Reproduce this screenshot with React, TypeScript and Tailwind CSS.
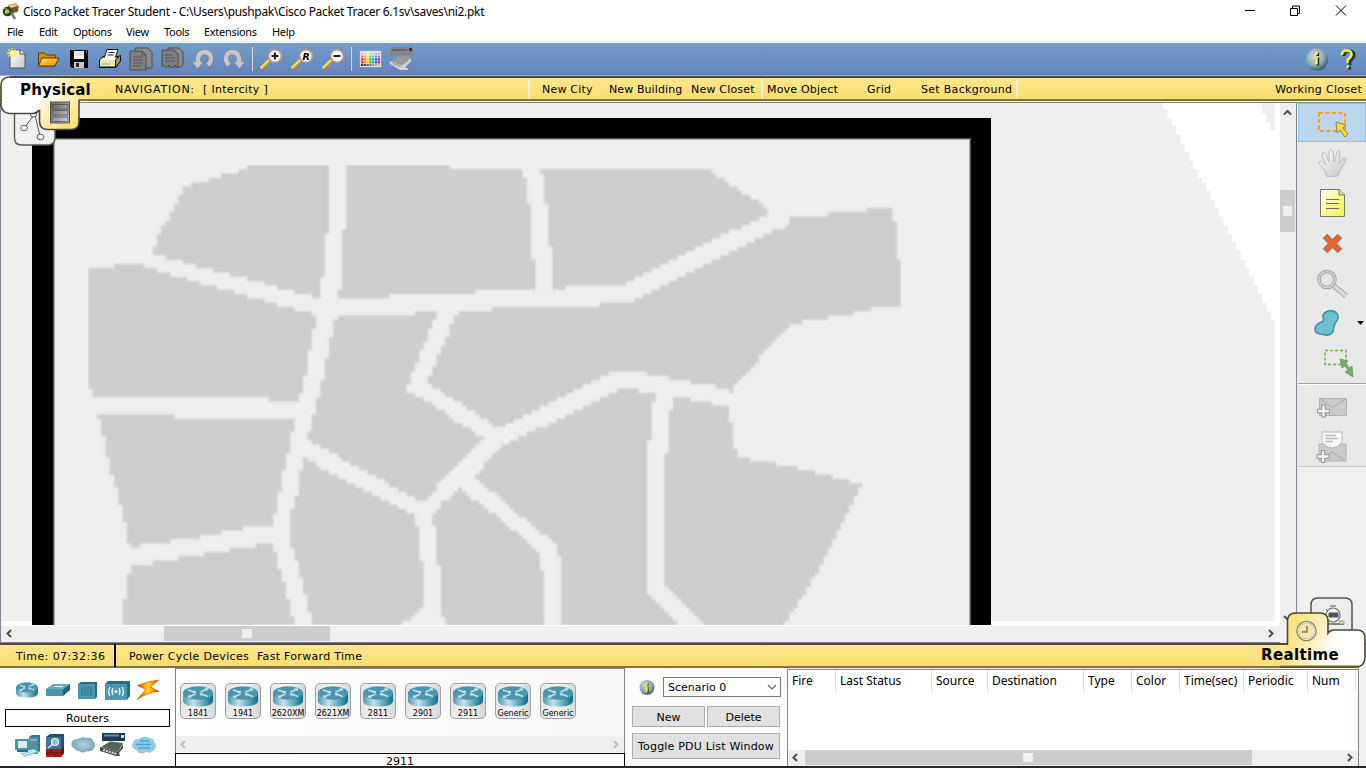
import React from "react";

type Pt = [number, number];

/* ------------------------------ city map ------------------------------ */

const BLOCKS: Pt[][] = [
  [[152, 254], [157, 238], [173, 210], [183, 190], [192, 183], [207, 180], [233, 173], [252, 165], [329, 165], [328, 218], [324, 270], [319, 298]],
  [[347, 165], [440, 166], [470, 169], [522, 169], [527, 183], [531, 225], [535, 290], [480, 291], [473, 293], [393, 296], [338, 298], [342, 275], [343, 230], [347, 222]],
  [[541, 169], [707, 169], [740, 191], [768, 208], [767, 216], [727, 233], [687, 253], [643, 275], [625, 284], [570, 286], [553, 290], [549, 225]],
  [[458, 311], [491, 310], [500, 307], [583, 306], [628, 303], [643, 295], [703, 267], [743, 245], [788, 225], [789, 217], [817, 216], [867, 210], [892, 207], [896, 233], [901, 283], [901, 307], [877, 307], [853, 314], [803, 321], [788, 327], [733, 387], [731, 392], [713, 386], [682, 381], [660, 376], [632, 371], [610, 373], [573, 391], [500, 427], [496, 427], [460, 403], [427, 383], [447, 337]],
  [[89, 270], [93, 268], [127, 265], [137, 264], [163, 273], [230, 291], [280, 305], [316, 315], [307, 367], [299, 401], [230, 397], [93, 397], [89, 387]],
  [[337, 316], [407, 315], [420, 312], [438, 311], [427, 337], [407, 387], [407, 392], [427, 400], [457, 422], [483, 438], [443, 478], [427, 500], [415, 499], [387, 483], [363, 470], [308, 440], [313, 417], [320, 393], [323, 377], [333, 327]],
  [[97, 415], [163, 415], [197, 419], [295, 419], [287, 457], [278, 500], [273, 526], [252, 527], [200, 537], [170, 541], [133, 547], [128, 543], [123, 513], [110, 467], [102, 430]],
  [[131, 565], [150, 563], [200, 555], [273, 543], [283, 580], [290, 607], [296, 626], [122, 626], [127, 580]],
  [[303, 457], [333, 475], [370, 493], [413, 515], [420, 537], [424, 608], [398, 626], [313, 626], [303, 583], [291, 543], [291, 513], [298, 493]],
  [[460, 488], [528, 542], [540, 553], [543, 580], [544, 626], [449, 626], [442, 617], [439, 567], [433, 517], [443, 502]],
  [[475, 477], [500, 446], [543, 427], [577, 410], [617, 390], [623, 388], [655, 393], [652, 413], [647, 463], [647, 593], [682, 626], [561, 626], [561, 570], [557, 543], [533, 527], [500, 498]],
  [[673, 397], [700, 401], [728, 407], [732, 430], [737, 457], [787, 466], [833, 477], [862, 484], [843, 520], [820, 567], [800, 600], [783, 626], [707, 626], [665, 585], [665, 473], [670, 413]],
];

const LIGHT: Pt[][] = [[[1161, 100], [1258, 100], [1277, 137], [1280, 137], [1280, 321], [1274, 321]]];

const STEP = 4.3;
const OX = 2.2;
const OY = 1.6;

/** Turns polygons into a path of square map cells. */
function cells(polys: Pt[][]): string {
  let d = "";
  for (const poly of polys) {
    const ys = poly.map((p) => p[1] - OY);
    const first = Math.floor(Math.min(...ys) / STEP);
    const last = Math.ceil(Math.max(...ys) / STEP);
    for (let r = first; r <= last; r++) {
      const cy = (r + 0.5) * STEP + OY;
      const hits: number[] = [];
      poly.forEach((a, i) => {
        const b = poly[(i + 1) % poly.length];
        if (a[1] <= cy !== b[1] <= cy) hits.push(a[0] + ((cy - a[1]) / (b[1] - a[1])) * (b[0] - a[0]));
      });
      hits.sort((p, q) => p - q);
      for (let i = 0; i + 1 < hits.length; i += 2) {
        const x0 = Math.round((hits[i] - OX) / STEP) * STEP + OX;
        const x1 = Math.round((hits[i + 1] - OX) / STEP) * STEP + OX;
        if (x1 > x0) d += `M${x0.toFixed(1)} ${(r * STEP + OY).toFixed(1)}H${x1.toFixed(1)}v${STEP + 0.05}H${x0.toFixed(1)}z`;
      }
    }
  }
  return d;
}

const blockPath = cells(BLOCKS);
const lightPath = cells(LIGHT);

function CityMap() {
  return (
    <svg width="1279" height="522" viewBox="1 103 1279 522" className="block shrink-0">
      <defs>
        <filter id="soft" x="0" y="0" width="100%" height="100%"><feGaussianBlur stdDeviation="1.200" /></filter>
      </defs>
      <rect x="0" y="103" width="1280" height="522" fill="#efefef" />
      <path d={lightPath} fill="#fff" />
      <rect x="1275" y="103" width="5" height="522" fill="#fff" />
      <rect x="0" y="621" width="1280" height="4" fill="#fff" />
      <rect x="32" y="118" width="959" height="510" fill="#000" />
      <rect x="53" y="138" width="918" height="500" fill="#555" />
      <rect x="54" y="139" width="916" height="500" fill="#a9a9a9" />
      <rect x="55" y="140" width="914" height="500" fill="#eee" />
      <g filter="url(#soft)"><path d={blockPath} fill="#cecece" /></g>
    </svg>
  );
}

/* ------------------------------ helpers ------------------------------ */

function Ico({ w, h, children, cls = "" }: { w: number; h: number; children: React.ReactNode; cls?: string }) {
  return <svg width={w} height={h} viewBox={`0 0 ${w} ${h}`} className={"block shrink-0 " + cls}>{children}</svg>;
}

const Defs = () => (
  <svg width="0" height="0" className="absolute">
    <defs>
      <linearGradient id="teal" x1="0" x2="1"><stop offset="0" stopColor="#4f97b0" /><stop offset=".35" stopColor="#c3e2ec" /><stop offset="1" stopColor="#04708f" /></linearGradient>
      <linearGradient id="page" x1="0" y1="0" x2="1" y2="1"><stop offset="0" stopColor="#fff" /><stop offset="1" stopColor="#c9c9c9" /></linearGradient>
      <linearGradient id="folder" x1="0" y1="0" x2="1" y2="1"><stop offset="0" stopColor="#ffe169" /><stop offset="1" stopColor="#e98a00" /></linearGradient>
      <linearGradient id="note" x1="0" y1="0" x2="1" y2="1"><stop offset="0" stopColor="#fffff0" /><stop offset="1" stopColor="#f5f53a" /></linearGradient>
      <radialGradient id="orb" cx=".4" cy=".35" r=".7"><stop offset="0" stopColor="#d5dadc" /><stop offset=".6" stopColor="#90a8b4" /><stop offset="1" stopColor="#2c5266" /></radialGradient>
      <radialGradient id="cloud"><stop offset="0" stopColor="#b8d3de" /><stop offset="1" stopColor="#7ba7b9" /></radialGradient>
      <linearGradient id="bolt" x1="0" x2="1"><stop offset="0" stopColor="#e22c00" /><stop offset=".5" stopColor="#ffe000" /><stop offset="1" stopColor="#e63000" /></linearGradient>
      <linearGradient id="physGrad" gradientUnits="userSpaceOnUse" x1="30" y1="18" x2="96" y2="2"><stop offset="0" stopColor="#fff" /><stop offset=".35" stopColor="#fffdf4" /><stop offset="1" stopColor="#fbe38a" stopOpacity="0" /></linearGradient>
      <linearGradient id="rackTab" x1="0" y1="0" x2="1" y2="1"><stop offset="0" stopColor="#fffbe8" /><stop offset="1" stopColor="#f9dd68" /></linearGradient>
      <linearGradient id="realGrad" gradientUnits="userSpaceOnUse" x1="44" y1="28" x2="86" y2="48"><stop offset="0" stopColor="#fae383" /><stop offset=".4" stopColor="#fcecaa" /><stop offset="1" stopColor="#fff" /></linearGradient>
      <linearGradient id="realFade" gradientUnits="userSpaceOnUse" x1="10" y1="0" x2="70" y2="0"><stop offset="0" stopColor="#fce486" stopOpacity="0" /><stop offset="1" stopColor="#fdeeb0" /></linearGradient>
      <linearGradient id="metal" x1="0" y1="0" x2="1" y2="1"><stop offset="0" stopColor="#666" /><stop offset="1" stopColor="#d0d0d0" /></linearGradient>
    </defs>
  </svg>
);

const Cell = ({ children }: { children: React.ReactNode }) => <Ico w={31} h={30}>{children}</Ico>;

const Curl = ({ flip = false }: { flip?: boolean }) => (
  <g transform={flip ? "translate(32 0) scale(-1 1)" : undefined}>
    <path d="M11 18V14Q12 8 18 8Q24 8.500 24 15Q24 18 21 21" fill="none" stroke="#818385" strokeWidth="6" />
    <path d="M5 17.500H16.500L10.500 25z" fill="#c3c6c8" stroke="#818385" strokeWidth=".7" />
    <path d="M11 19V14Q12 8 18 8Q24 8.500 24 15Q24 18 21 21" fill="none" stroke="#c3c6c8" strokeWidth="4.400" />
  </g>
);

const Lens = ({ mark }: { mark: string }) => (
  <Cell>
    <path d="M6 24.500L15 16" stroke="#cf9d1c" strokeWidth="3.200" />
    <path d="M5.500 24L14 16" stroke="#ffe04a" strokeWidth="2" />
    <circle cx="20" cy="12" r="6.300" fill="#f7f7f4" stroke="#c29a86" strokeWidth="1.600" />
    {mark === "R" ? (
      <text x="16.600" y="15.500" fontSize="9.500" fontWeight="700" fontStyle="italic" fontFamily="DejaVu Sans, sans-serif">R</text>
    ) : (
      <path d={mark === "+" ? "M16.500 12h7M20 8.500v7" : "M16.500 12h7"} stroke="#222" strokeWidth="2" />
    )}
  </Cell>
);

function Chevron({ dir, color = "#505050" }: { dir: "left" | "right" | "up" | "down"; color?: string }) {
  const d = { left: "M6 1L2.500 4.500L6 8", right: "M3 1L6.500 4.500L3 8", up: "M1 6.500L4.500 3L8 6.500", down: "M1 3L4.500 6.500L8 3" }[dir];
  return <Ico w={9} h={9}><path d={d} fill="none" stroke={color} strokeWidth="2" /></Ico>;
}

/* ------------------------------ top bars ------------------------------ */

function TitleBar() {
  return (
    <div className="flex h-[22px] items-center bg-white pl-[2px]">
      <Ico w={18} h={18}>
        <path d="M6 3l8-2 3 3-1 6-7 2-4-4z" fill="#b98f4c" />
        <path d="M7 3l7-1 2 2-7 2z" fill="#e4c88d" />
        <path d="M9 6l7-2v5l-6 2z" fill="#6c5427" />
        <circle cx="5.500" cy="9.500" r="4.800" fill="#253b2c" />
        <circle cx="5" cy="9.500" r="2.200" fill="#dfc928" />
        <path d="M2 7l3-1M3 12l3-1M8 10l4 2" stroke="#61a05d" />
        <path d="M10 12l3 5" stroke="#777d80" strokeWidth="2.500" />
      </Ico>
      <span className="ml-[3px] w-[500px] whitespace-nowrap pt-[2px] font-['Noto_Sans',sans-serif] text-[12px] tracking-[-0.32px]">
        Cisco Packet Tracer Student - C:\Users\pushpak\Cisco Packet Tracer 6.1sv\saves\ni2.pkt
      </span>
      <Ico w={110} h={20} cls="ml-auto mr-[16px]">
        <path d="M5 9.500h10" stroke="#000" />
        <path d="M50.500 7.500h7v7h-7zM52.500 7v-2h7v7.500h-2" fill="none" stroke="#000" />
        <path d="M96 4.500l10 10M106 4.500l-10 10" stroke="#000" />
      </Ico>
    </div>
  );
}

function MenuBar() {
  const items: [string, string][] = [
    ["File", "w-[32px]"], ["Edit", "w-[34px]"], ["Options", "w-[53px]"], ["View", "w-[38px]"],
    ["Tools", "w-[40px]"], ["Extensions", "w-[68px]"], ["Help", "w-[40px]"],
  ];
  return (
    <div className="flex h-[20px] items-center border-b border-[#f0f0f0] bg-white pl-[7px] pt-[2px] font-['Noto_Sans',sans-serif] text-[11px] tracking-[-0.3px]">
      {items.map(([t, w]) => <span key={t} className={w + " whitespace-nowrap"}>{t}</span>)}
    </div>
  );
}

function Toolbar() {
  const swatches = ["#e24", "#e80", "#dd0", "#3b3", "#0aa", "#35d", "#92c"];
  return (
    <div className="mt-px flex h-[33px] items-center border-b border-[#8db5dd] bg-gradient-to-b from-[#739ecb] to-[#6484ba] pl-px">
      <Cell>
        <path d="M9 6h10l5 4v14H9z" fill="url(#page)" stroke="#555" />
        <path d="M19 6v4h5" fill="#fff" stroke="#444" />
        <path d="M11 4v10M6 9h10M7.500 5.500l7 7M14.500 5.500l-7 7" stroke="#ffef3a" strokeWidth="1.300" />
        <circle cx="11" cy="9" r="2" fill="#fffdc0" />
      </Cell>
      <Cell>
        <path d="M6.500 22V9h6l2 2h9v11z" fill="#d68b06" stroke="#5b3d08" />
        <path d="M6.500 22l3.500-8h17l-4 8z" fill="url(#folder)" stroke="#5b3d08" />
      </Cell>
      <Cell>
        <path d="M7 6h18v18H9l-2-2z" fill="#070707" />
        <path d="M11 7h10v8H11z" fill="#f4f4f4" /><path d="M12 9h8M12 11h8" stroke="#ccc" />
        <path d="M11 18h10v6H11z" fill="#c7c7c7" /><path d="M13 19h3v4h-3z" fill="#222" />
        <path d="M23 8h1" stroke="#fff" />
      </Cell>
      <Cell>
        <path d="M5 16l4-4h15l3-1v6l-5 7H5z" fill="#111" />
        <path d="M13 5.500h11l-3 9H10z" fill="#fff" stroke="#111" />
        <path d="M14.500 8.500h6M13.500 11h6" stroke="#222" />
        <path d="M6 16h15v6.500H6z" fill="#e6e9bd" /><path d="M6 16l3-2.500h14L21 16z" fill="#ffffdb" />
        <path d="M22 16l4-4v5l-4 5z" fill="#909870" /><path d="M8 20h8" stroke="#b6ba8e" strokeWidth="1.500" />
      </Cell>
      <Cell>
        <path d="M10 4h13l4 4v16H12z" fill="#898b8e" stroke="#4c4f53" />
        <path d="M5 7h12l4 4v15H5z" fill="#7d7f82" stroke="#4c4f53" />
        <path d="M17 7v4h4M8 13h10M8 16h10M8 19h10M8 22h8" fill="none" stroke="#53565a" />
      </Cell>
      <Cell>
        <path d="M12 4h11l4 4v13l-3 2H12z" fill="#898b8e" stroke="#4c4f53" />
        <path d="M6 6h12l4 4v14l-3-3-3 3-3-3-3 3-2-3-2 2z" fill="#7d7f82" stroke="#4c4f53" />
        <path d="M9 11h8M9 14h10M9 17h10" stroke="#53565a" />
      </Cell>
      <Cell><Curl /></Cell>
      <Cell><Curl flip /></Cell>
      <div className="ml-[3px] mr-[2px] h-[24px] w-px bg-[#d3dae5]" />
      <Lens mark="+" /><Lens mark="R" /><Lens mark="-" />
      <div className="mx-[3px] h-[24px] w-px bg-[#d3dae5]" />
      <Cell>
        <path d="M5 7h21v16H5z" fill="#f2f2f2" stroke="#bbb" strokeWidth=".5" />
        {swatches.map((c, i) => (
          <g key={c}>
            <rect x={6 + i * 2.8} y="8.500" width="2.200" height="2.200" fill={c} opacity=".35" />
            <rect x={6 + i * 2.8} y="11.500" width="2.200" height="2.200" fill={c} opacity=".65" />
            <rect x={6 + i * 2.8} y="14.300" width="2.200" height="2.300" fill={c} />
            <rect x={6 + i * 2.8} y="17.200" width="2.200" height="2.300" fill={c} />
            <rect x={6 + i * 2.8} y="20" width="2.200" height="2" fill="#333" opacity={1 - i * 0.12} />
          </g>
        ))}
      </Cell>
      <Cell>
        <path d="M4 3h23v8.500H4z" fill="#858585" /><path d="M6 5h15v2H6z" fill="#666" /><path d="M23 4h3v3h-3z" fill="#333" />
        <path d="M4 18l10-6.500 11 1-2 6-8 5-11-4z" fill="#9b9b9b" />
        <path d="M3 17l13 4.500 9-7v3l-6 6 3 1v1.500h-8L4 20z" fill="#d2d2d2" /><path d="M7 19.500l9 3.500" stroke="#777" strokeDasharray="2 1" />
      </Cell>
      <Ico w={54} h={30} cls="ml-auto mr-[7px]">
        <circle cx="12" cy="15.500" r="11" fill="url(#orb)" />
        <path d="M12.700 9v3M12.700 13.500v8" stroke="#222" strokeWidth="3" />
        <path d="M11.500 8v3M11.500 12.500v8" stroke="#f5f52a" strokeWidth="2.500" />
        <path d="M38 11q0-5 5-5q5 0 5 4q0 3-4 6v4" transform="translate(1 1)" fill="none" stroke="#252e38" strokeWidth="3" />
        <path d="M37 11q0-4.500 4.500-4.500q5 0 5 3.500q0 3-4 6v3" fill="none" stroke="#f5f52a" strokeWidth="2.400" />
        <path d="M43 22.500h3v3h-3z" fill="#252e38" /><path d="M41.500 21.500h2.400v2.400h-2.400z" fill="#f5f52a" />
      </Ico>
    </div>
  );
}

function PhysicalTab() {
  return (
    <div className="absolute left-0 top-0">
      <svg width="110" height="72" viewBox="0 0 110 72" className="block">
        <path d="M14.500 30V62q0 7 7 7H49q6-1 6-7V30z" fill="#f1f1f1" stroke="#5a5a5a" strokeWidth="1.500" />
        <path d="M34 39L24 52M35 39L40 60" stroke="#555" fill="none" />
        <ellipse cx="33.500" cy="38.500" rx="3" ry="2.500" fill="#fff" stroke="#444" />
        <ellipse cx="24" cy="52" rx="3.500" ry="2.800" fill="#fff" stroke="#555" /><ellipse cx="40.500" cy="61" rx="3.500" ry="2.800" fill="#fff" stroke="#555" />
        <path d="M0 0H10V3L1 10z" fill="#fff" />
        <path d="M39 22V45q0 8.500 8 8.500H71q8 0 8-8V22z" fill="url(#rackTab)" />
        <path d="M40 2H10Q1.500 2 1.500 9V29Q2 37 10 37.500H32Q39 38 39 31V25H40z" fill="#fff" />
        <path d="M40 2H100V23H40z" fill="url(#physGrad)" />
        <path d="M12 1H10Q1 1.500 1 9V29Q2 37 10 37.500H32Q37 37.500 39 34" fill="none" stroke="#48473f" strokeWidth="1.600" />
        <path d="M39.500 34V45q0 8.500 8 8.500H71q8 0 8-8V24" fill="none" stroke="#4b4838" strokeWidth="1.600" />
        <rect x="50.500" y="26" width="19" height="21" fill="url(#metal)" stroke="#555" />
        <path d="M52 28.500h16v4.500H52zM52 34.500h16V39H52zM52 41h16v4.500H52z" fill="url(#metal)" stroke="#494949" strokeWidth=".7" />
      </svg>
      <span className="absolute left-[20px] top-[4px] font-['DejaVu_Sans',sans-serif] text-[15px] font-bold leading-[20px] tracking-[0.15px]">Physical</span>
    </div>
  );
}

function NavBar() {
  return (
    <div className="relative z-10 mb-px flex h-[25px] items-center border-b-2 border-t-2 border-b-[#847335] border-t-[#4b4a40] bg-gradient-to-b from-[#fce68d] to-[#fadf6f] pl-[115px] font-['DejaVu_Sans',sans-serif] text-[11px] tracking-[0.3px]">
      <span className="w-[88px] whitespace-nowrap pt-[3px] tracking-[0.75px]">NAVIGATION:</span>
      <span className="w-[325px] whitespace-nowrap pt-[3px]">[ Intercity ]</span>
      <span className="h-[20px] w-[2px] bg-[#f2f0e6]" />
      <span className="w-[79px] whitespace-nowrap pl-[12px] pt-[3px] tracking-[0.2px]">New City</span>
      <span className="w-[82px] whitespace-nowrap pt-[3px] tracking-[0.1px]">New Building</span>
      <span className="w-[70px] whitespace-nowrap pt-[3px] tracking-[0.2px]">New Closet</span>
      <span className="h-[20px] w-[2px] bg-[#f2f0e6]" />
      <span className="w-[104px] whitespace-nowrap pl-[4px] pt-[3px] tracking-[0.2px]">Move Object</span>
      <span className="w-[54px] whitespace-nowrap pt-[3px]">Grid</span>
      <span className="w-[95px] whitespace-nowrap pt-[3px]">Set Background</span>
      <span className="h-[20px] w-[2px] bg-[#f2f0e6]" />
      <span className="ml-auto mr-[4px] whitespace-nowrap pt-[3px]">Working Closet</span>
      <div className="absolute left-0 top-[-2px]"><PhysicalTab /></div>
    </div>
  );
}

/* ------------------------------ workspace ------------------------------ */

const Envelope = ({ open = false }: { open?: boolean }) => (
  <g>
    <path d="M19 6h27v17H19z" fill="#c9c9c9" stroke="#b2b2b2" />
    {open ? (
      <>
        <path d="M22-6h20V4q-4 6-10 6T22 4z" fill="#f8f8f8" stroke="#b5b5b5" />
        <path d="M25-2.500h11M25 .5h13M25 3.500h8" stroke="#bbb" strokeWidth="1.500" />
        <path d="M19 23l13-9 13 9" fill="none" stroke="#aaa" />
      </>
    ) : (
      <path d="M19 6l13 9 14-9" fill="none" stroke="#a9a9a9" />
    )}
    <path d="M23 12v13M16.500 18.500h13" stroke="#969696" strokeWidth="4.500" /><path d="M23 13v11M17.500 18.500h11" stroke="#f6f6f6" strokeWidth="2.300" />
  </g>
);

function ToolStrip() {
  return (
    <div className="flex w-[68px] flex-col">
      <div className="flex h-[39px] border border-[#8fc3ee] bg-[#bbd6ed]">
        <Ico w={66} h={37}>
          <rect x="20" y="9" width="26" height="18" fill="none" stroke="#f6a21c" strokeWidth="2" strokeDasharray="4 2.500" />
          <path d="M37 18l10 3-3 3 5 6-3 3-5-7-3 3z" fill="#ffdb32" stroke="#8a8152" strokeWidth="1" />
        </Ico>
      </div>
      <div className="flex flex-col border-b border-[#a3a3a3] bg-[#e9e9e9] pb-px">
        <Ico w={68} h={40}>
          <defs><linearGradient id="hand" x2="1" y2="1"><stop stopColor="#fff" /><stop offset="1" stopColor="#c5c5c5" /></linearGradient></defs>
          <path d="M29 34.500q-2-7-7-12q-2-3 0-3.500q2 0 6 4l-4-10q0-3 3-2l4 9l0-11q1-3 4 0l1 11l3-10q3-2 3 1l-1 11l4-6q4-1 3 2l-6 11l-2 5z" fill="url(#hand)" stroke="#bcbcbc" />
        </Ico>
        <Ico w={68} h={40}>
          <path d="M22.500 7.500h19l5 5v22h-24z" fill="url(#note)" stroke="#75756c" /><path d="M41 7v6h6" fill="#dddda0" stroke="#75756c" />
          <path d="M28 17.500h13M28 21.500h13M28 26.500h13" stroke="#6e6e67" />
        </Ico>
        <Ico w={68} h={40}>
          <path d="M27 14l15 15M42 14L27 29" stroke="#857c79" strokeWidth="6.500" /><path d="M27.500 14.500l14 14M41.500 14.500l-14 14" stroke="#ec6223" strokeWidth="4.500" />
        </Ico>
        <Ico w={68} h={40}>
          <path d="M35 23l13 11" stroke="#a7a7a7" strokeWidth="5.500" /><path d="M35 23l13 11" stroke="#dadada" strokeWidth="3.500" />
          <circle cx="29" cy="17.500" r="8" fill="#e4e4e4" stroke="#a5a5a5" strokeWidth="3.500" /><circle cx="29" cy="17.500" r="8" fill="none" stroke="#d7d7d7" strokeWidth="1.500" />
        </Ico>
        <Ico w={68} h={40}>
          <g transform="translate(0 2.500)"><path d="M28 7.500Q33 4.500 38 8Q43 12 37 19Q35 24 35 27Q32 32 25 30Q16 29 17 24Q18 19 25 17Q26 14 25 12Q25 9 28 7.500z" fill="#6bc1ce" stroke="#42909b" strokeWidth="1.600" /></g>
          <path d="M59 19h7l-3.500 4z" fill="#111" />
        </Ico>
        <Ico w={68} h={40}>
          <rect x="27" y="8.500" width="21" height="14" fill="none" stroke="#71b53f" strokeWidth="1.500" strokeDasharray="3 2" />
          <path d="M42 17l8 2-2 2 3 5 3-2 1 11-8-5 3-2-3-4-3 2z" fill="#74ad68" stroke="#6f926c" strokeWidth=".8" />
        </Ico>
      </div>
      <div className="flex flex-col border-b border-[#c9c9c9] border-t border-t-white bg-[#e9e9e9]">
        <Ico w={68} h={38}><g transform="translate(2.500 7.500)"><Envelope /></g></Ico>
        <Ico w={68} h={43}><g transform="translate(2 15)"><Envelope open /></g></Ico>
      </div>
    </div>
  );
}

function Workspace() {
  return (
    <div className="flex h-[541px] shrink-0 border-l border-t border-[#81858d] bg-[#efefef]">
      <div className="flex w-[1279px] flex-col">
        <CityMap />
        <div className="flex h-[18px] items-start border-b border-t border-b-[#81858d] border-t-white bg-[#efefef]">
          <div className="flex w-[163px] justify-start pl-[4px] pt-[3px]"><Chevron dir="left" /></div>
          <div className="flex h-[15px] w-[166px] items-center justify-center bg-[#cdcdcd]"><div className="h-[9px] w-[10px] bg-[#f0f0f0]" /></div>
          <div className="ml-auto mr-[5px] pt-[3px]"><Chevron dir="right" /></div>
        </div>
      </div>
      <div className="flex w-[17px] flex-col items-start border-r border-[#81858d] bg-[#efefef]">
        <div className="flex h-[87px] pl-[3px] pt-[5px]"><Chevron dir="up" /></div>
        <div className="flex h-[42px] w-[15px] items-center justify-center bg-[#cdcdcd]"><div className="h-[10px] w-[9px] bg-[#f0f0f0]" /></div>
        <div className="mb-[21px] mt-auto pl-[3px]"><Chevron dir="down" /></div>
      </div>
      <div className="flex bg-[#f0f0f0] pl-px"><ToolStrip /></div>
    </div>
  );
}

function RealtimeTab() {
  return (
    <div className="absolute right-0 top-[-48px] h-[72px] w-[116px]">
      <svg width="116" height="72" viewBox="0 0 116 72" className="block">
        <path d="M61 46V8q0-7 7-7H95q7 0 7 7v36z" fill="#eeeeee" stroke="#535353" strokeWidth="1.500" />
        <circle cx="83" cy="18" r="7" fill="#f7f7f7" stroke="#666" strokeWidth="1.200" />
        <path d="M80 9h6M76 12l2 2M79 16h9v4H79z" stroke="#555" fill="#555" /><path d="M77 27h17" stroke="#888" strokeWidth="2" /><rect x="89" y="24" width="5" height="3" fill="#e8d473" stroke="#777" strokeWidth=".6" />
        <path d="M109 60h7v12h-9z" fill="#f0f0f0" />
        <path d="M8 48H38V69H8z" fill="url(#realFade)" />
        <path d="M38 69V24q0-8 8-8H70q8 0 8 8V36q2-3 6-3H107q8 0 8 8V61q0 7-7 8z" fill="url(#realGrad)" />
        <path d="M36 46.500H37.500V24q0-8 8-8H70q8 0 8 8V36q2-3 6-3H107q8 0 8 8V60q0 8-7 10" fill="none" stroke="#4b4838" strokeWidth="1.600" />
        <path d="M30 68.500H109" stroke="#d5b840" strokeWidth="1.200" /><path d="M30 70H109" stroke="#685922" strokeWidth="1.800" />
        <circle cx="56.500" cy="34" r="9" fill="#f7e9a5" stroke="#88836c" strokeWidth="2.500" /><circle cx="56.500" cy="34" r="8.500" fill="none" stroke="#fff" /><path d="M57 29v6h-5" fill="none" stroke="#777" strokeWidth="1.500" />
      </svg>
      <span className="absolute left-[11px] top-[48px] font-['DejaVu_Sans',sans-serif] text-[15px] font-bold leading-[20px] tracking-[0.35px]">Realtime</span>
    </div>
  );
}

function TimeBar() {
  return (
    <div className="relative z-10 flex h-[25px] items-center border-b-2 border-t-2 border-b-[#847335] border-t-[#4b4a40] bg-gradient-to-b from-[#fce68d] to-[#fadf6f] font-['DejaVu_Sans',sans-serif] text-[11px] tracking-[0.3px]">
      <span className="flex h-[23px] w-[116px] items-center whitespace-nowrap border-r-2 border-black pl-[16px] pt-[3px] tracking-[0.42px]">Time: 07:32:36</span>
      <span className="w-[141px] whitespace-nowrap pl-[13px] pt-[3px] tracking-[0.34px]">Power Cycle Devices</span>
      <span className="whitespace-nowrap pt-[3px]">Fast Forward Time</span>
      <RealtimeTab />
    </div>
  );
}

/* ------------------------------ bottom area ------------------------------ */

const Router = () => (
  <g>
    <path d="M0 6.500v8q0 6 15 6t15-6v-8z" fill="url(#teal)" />
    <ellipse cx="15" cy="7" rx="15" ry="6.800" fill="#4b96af" />
    <path d="M5 4l8 2.500M25 10.500l-8-3M17.500 6l7-3M12.500 8l-7 3" fill="none" stroke="#c5e2eb" strokeWidth="1.500" />
    <path d="M13 7l-4-.2 3-2.600zM17 7.500l4.500.2-3.500 2.600zM25.500 2.400l-4.500-.2 3.500 2.900zM4.500 11.400l4.700.6-3.700-3z" fill="#c5e2eb" />
  </g>
);

const Model = ({ label }: { label: string }) => (
  <div className="flex h-[36px] w-[36px] shrink-0 flex-col items-center rounded-[5px] border border-[#a0a0a0] bg-gradient-to-r from-[#e6e6e6] via-[#f5f5f5] to-[#d6d6d6]">
    <Ico w={30} h={23} cls="mt-[2px]"><Router /></Ico>
    <span className="whitespace-nowrap font-['DejaVu_Sans',sans-serif] text-[8px] leading-[9px]">{label}</span>
  </div>
);

function Palette() {
  return (
    <div className="flex w-[175px] flex-col bg-white">
      <div className="flex h-[41px] items-start pl-[15px] pt-[11px]">
        <Ico w={31} h={22}><g transform="translate(1 3) scale(.73 .76)"><Router /></g></Ico>
        <Ico w={31} h={22}><path d="M0 10l7-5h17l-7 5z" fill="#6aa8bc" /><path d="M0 10h17v7H0z" fill="#4c95ad" /><path d="M17 10l7-5v6l-7 6z" fill="#166783" /><path d="M8 7.500h9" stroke="#e1f0f5" /></Ico>
        <Ico w={28} h={22}><path d="M1 5l3-2h16v15l-2 2z" fill="#1d708d" /><path d="M1 5h17v15H1z" fill="#4b95ae" /><path d="M5 8v9M8 8v9M11 8v9M14 8v9" stroke="#27728a" /></Ico>
        <Ico w={31} h={22}>
          <path d="M0 5l3-3h22v15l-3 4H0z" fill="#216f89" /><path d="M0 5h22v16H0z" fill="#4c96af" />
          <circle cx="11" cy="12.500" r="1.600" fill="#fff" /><path d="M8 9q-2 3.500 0 7M5 8q-3 4.500 0 9M14 9q2 3.500 0 7M17 8q3 4.500 0 9" fill="none" stroke="#e9f6fa" strokeWidth="1.300" />
        </Ico>
        <Ico w={26} h={22}><path d="M22.500 1Q12 2 1.500 6.500L10 10.500 1 20.500Q12 13 23 12.500L14.500 8z" fill="url(#bolt)" stroke="#e04a13" strokeWidth=".7" /></Ico>
      </div>
      <div className="ml-[5px] flex h-[18px] w-[165px] items-center justify-center border border-black pt-[2px] font-['DejaVu_Sans',sans-serif] text-[11px] tracking-[0.15px]">Routers</div>
      <div className="flex h-[39px] items-start pl-[15px] pt-[6px]">
        <Ico w={31} h={26}>
          <path d="M14 4l3-2h8v16l-3 3h-8z" fill="#2e7891" /><path d="M14 4h9v16h-9z" fill="#518ea1" /><path d="M15 7h7" stroke="#cce" />
          <path d="M0 6h15v11H0z" fill="#4a94a9" /><path d="M3 8h9v7H3z" fill="#d9edf2" />
          <path d="M5 19l14-3 5 3-15 5z" fill="#83c7da" /><path d="M6 20l13-3M8 22l13-4" stroke="#e6fbff" /><path d="M2 17h11v2H2z" fill="#2b6f84" />
        </Ico>
        <Ico w={25} h={26}><path d="M0 4l4-3h14v19l-3 4H0z" fill="#1d5272" /><path d="M0 4h15v12H0z" fill="#3d7998" /><path d="M0 16h15v8H0z" fill="#a81d16" /><path d="M15 16l3-3v7l-3 4z" fill="#75120f" /><path d="M0 20h15M5 16v4M10 20v4" stroke="#64100d" /><circle cx="9" cy="9" r="3.500" fill="#8cc0d3" stroke="#f0f8fc" strokeWidth="1.200" /><path d="M7 11l-5 4" stroke="#e3f1fa" strokeWidth="1.500" /></Ico>
        <Ico w={29} h={26}><path d="M4 16q-5-3-3-7q1-3 6-3q4-3 8-1q6-1 7 3q4 3 1 7q-2 4-7 3q-4 3-8 0q-3 0-4-2z" fill="url(#cloud)" /></Ico>
        <Ico w={32} h={26}><path d="M2 0h23v8H2z" fill="#203c55" /><path d="M4 2.500h15" stroke="#5b8fb5" strokeWidth="2" /><path d="M21 2h3v3h-3z" fill="#d0d8dc" /><path d="M1 14l9-5.500 13 1.500-5 9z" fill="#4e645b" /><path d="M0 14l18 5 5-8v4l-4 5 1 3h-4L0 18z" fill="#4a4a48" /><path d="M3 17l14 4" stroke="#ddd" strokeWidth="2" strokeDasharray="2 1" /></Ico>
        <Ico w={27} h={26}><path d="M4 17q-6-3-3-7q0-4 6-4q5-4 10-1q5 0 5 4q4 4 0 8q-3 4-8 2q-5 3-8 0z" fill="#91cbe0" /><path d="M8 8h9M4 11.500h9M11 11.500h8M6 15h12" stroke="#45a3d3" strokeWidth="1.500" /></Ico>
      </div>
    </div>
  );
}

function ModelList() {
  const models = ["1841", "1941", "2620XM", "2621XM", "2811", "2901", "2911", "Generic", "Generic"];
  return (
    <div className="flex w-[450px] flex-col">
      <div className="flex h-[85px] flex-col border-l border-r border-t border-[#81858d] bg-gradient-to-r from-white to-[#f7f7f7]">
        <div className="flex h-[67px] gap-[9px] pl-[4px] pt-[14px]">
          {models.map((m, i) => <Model key={i} label={m} />)}
        </div>
        <div className="flex h-[16px] items-center justify-between bg-[#efefef] pl-[3px] pr-[4px]">
          <Chevron dir="left" color="#bcbcbc" /><Chevron dir="right" color="#bcbcbc" />
        </div>
      </div>
      <div className="flex h-[13px] items-center justify-center border-l border-r border-t border-black bg-white pt-[3px] font-['DejaVu_Sans',sans-serif] text-[11px] leading-[11px]">2911</div>
    </div>
  );
}

function ScenarioPanel() {
  return (
    <div className="flex w-[162px] flex-col bg-[#fcfcfc] pl-[7px] pt-[9px] font-['DejaVu_Sans',sans-serif] text-[11px]">
      <div className="flex h-[20px] items-center">
        <Ico w={31} h={18}><circle cx="15" cy="9.500" r="7.500" fill="url(#orb)" /><path d="M15.700 5.500v2M15.700 8.500v6" stroke="#333" strokeWidth="2" /><path d="M14.700 5v2M14.700 8v6" stroke="#f5f52a" strokeWidth="1.800" /></Ico>
        <div className="flex h-[20px] w-[118px] items-center justify-between border border-[#777] bg-white pl-[4px] pr-[3px]">
          <span className="pt-[3px]">Scenario 0</span>
          <Ico w={10} h={8}><path d="M1 2l4 4 4-4" fill="none" stroke="#666" strokeWidth="1.200" /></Ico>
        </div>
      </div>
      <div className="mt-[9px] flex gap-[2px]">
        <div className="flex h-[21px] w-[73px] items-center justify-center border border-[#adadad] bg-[#e1e1e1] pt-[3px]">New</div>
        <div className="flex h-[21px] w-[73px] items-center justify-center border border-[#adadad] bg-[#e1e1e1] pt-[3px]">Delete</div>
      </div>
      <div className="mt-[6px] flex h-[26px] w-[148px] items-center justify-center whitespace-nowrap border border-[#adadad] bg-[#e1e1e1] pt-[2px] tracking-[0.2px]">Toggle PDU List Window</div>
    </div>
  );
}

function PduTable() {
  const cols: [string, string][] = [
    ["Fire", "w-[48px]"], ["Last Status", "w-[96px]"], ["Source", "w-[56px]"], ["Destination", "w-[96px]"], ["Type", "w-[48px]"],
    ["Color", "w-[48px]"], ["Time(sec)", "w-[64px]"], ["Periodic", "w-[64px]"], ["Num", "w-[48px]"],
  ];
  return (
    <div className="mt-px flex w-[572px] flex-col border-l border-r border-t border-[#81858d] bg-white">
      <div className="flex h-[21px]">
        {cols.map(([t, w]) => (
          <span key={t} className={w + " shrink-0 whitespace-nowrap border-r border-[#dedede] pl-[4px] pt-[4px] font-['Noto_Sans',sans-serif] text-[12px] leading-[14px]"}>{t}</span>
        ))}
      </div>
      <div className="mt-auto flex h-[16px] items-start bg-[#efefef]">
        <div className="flex w-[17px] pl-[3px] pt-[3px]"><Chevron dir="left" /></div>
        <div className="flex h-[15px] w-[447px] items-center justify-center bg-[#cdcdcd]"><div className="mr-px h-[9px] w-[10px] bg-[#f0f0f0]" /></div>
        <div className="ml-auto mr-[4px] pt-[3px]"><Chevron dir="right" /></div>
      </div>
    </div>
  );
}

export default function App() {
  return (
    <div className="flex h-[768px] w-[1366px] flex-col overflow-hidden bg-white text-black">
      <Defs />
      <TitleBar />
      <MenuBar />
      <Toolbar />
      <NavBar />
      <Workspace />
      <TimeBar />
      <div className="flex h-[98px] shrink-0 bg-[#f0f0f0]">
        <Palette />
        <ModelList />
        <ScenarioPanel />
        <PduTable />
      </div>
      <div className="h-[2px] bg-[#25272b]" />
    </div>
  );
}
